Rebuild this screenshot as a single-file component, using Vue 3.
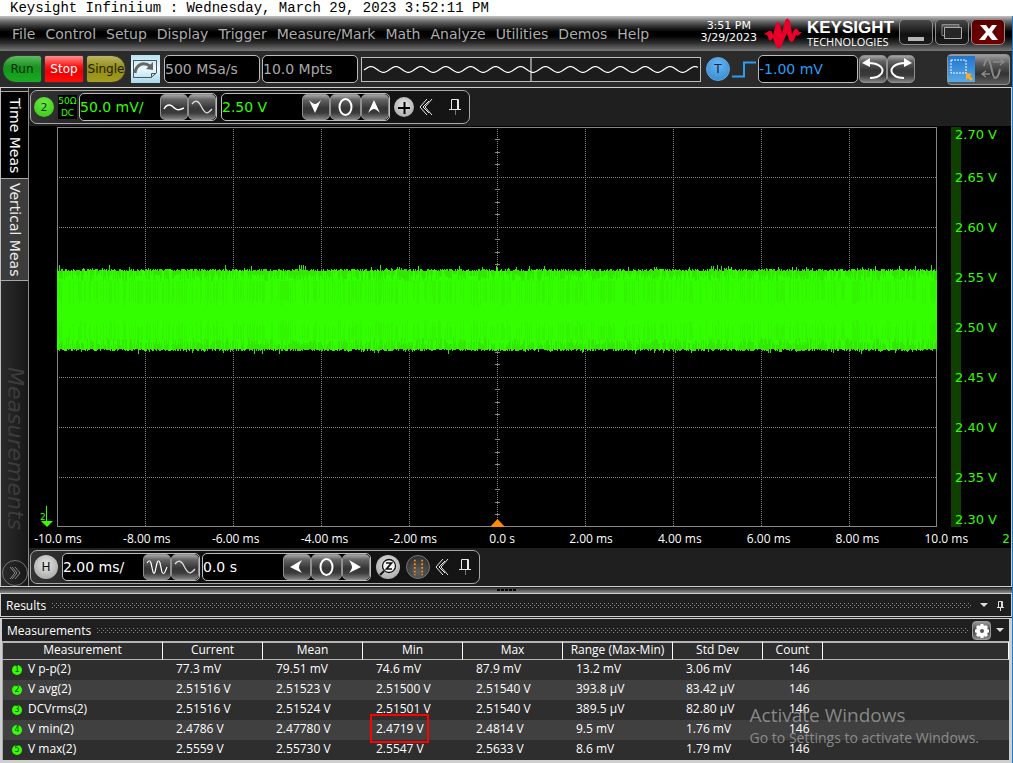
<script setup>
import { ref } from 'vue'

const menus = ['File', 'Control', 'Setup', 'Display', 'Trigger', 'Measure/Mark', 'Math', 'Analyze', 'Utilities', 'Demos', 'Help']

const sampleRate = ref('500 MSa/s')
const memoryDepth = ref('10.0 Mpts')
const triggerLevel = ref('-1.00 mV')
const verticalScale = ref('50.0 mV/')
const verticalOffset = ref('2.50 V')
const timeScale = ref('2.00 ms/')
const timePosition = ref('0.0 s')

const voltLabels = ['2.70 V', '2.65 V', '2.60 V', '2.55 V', '2.50 V', '2.45 V', '2.40 V', '2.35 V', '2.30 V']
const timeLabels = ['-10.0 ms', '-8.00 ms', '-6.00 ms', '-4.00 ms', '-2.00 ms', '0.0 s', '2.00 ms', '4.00 ms', '6.00 ms', '8.00 ms', '10.0 ms']

const columns = ['Measurement', 'Current', 'Mean', 'Min', 'Max', 'Range (Max-Min)', 'Std Dev', 'Count']
const rows = [
  { name: 'V p-p(2)', values: ['77.3 mV', '79.51 mV', '74.6 mV', '87.9 mV', '13.2 mV', '3.06 mV', '146'] },
  { name: 'V avg(2)', values: ['2.51516 V', '2.51523 V', '2.51500 V', '2.51540 V', '393.8 µV', '83.42 µV', '146'] },
  { name: 'DCVrms(2)', values: ['2.51516 V', '2.51524 V', '2.51501 V', '2.51540 V', '389.5 µV', '82.80 µV', '146'] },
  { name: 'V min(2)', values: ['2.4786 V', '2.47780 V', '2.4719 V', '2.4814 V', '9.5 mV', '1.76 mV', '146'], marked: 2 },
  { name: 'V max(2)', values: ['2.5559 V', '2.55730 V', '2.5547 V', '2.5633 V', '8.6 mV', '1.79 mV', '146'] }
]

// Overview trace shown in the toolbar: one sine period every 25 units.
let overview = ''
for (let x = 2; x <= 337; x++) {
  const y = 12 - 3 * Math.cos(((x - 9) / 25) * 2 * Math.PI)
  overview += (overview ? 'L' : 'M') + x + ' ' + y.toFixed(1)
}

// Small deterministic generator so the noise looks the same on every load.
let seed = 2023
function random() {
  seed = (seed * 1103515245 + 12345) % 2147483648
  return seed / 2147483648
}

let noise = ''
let shade = ''
let core = ''
for (let x = 0; x < 880; x++) {
  const spikeUp = random() < 0.07 ? 1 + Math.floor(random() * 4) : 0
  const spikeDown = random() < 0.07 ? 1 + Math.floor(random() * 3) : 0
  const top = 144 - Math.floor(random() * 3) - spikeUp
  const bottom = 222 + Math.floor(random() * 3) + spikeDown
  noise += `M${x + 0.5} ${top}V${bottom}`
  if (random() < 0.75) {
    shade += `M${x + 0.5} ${top}V${147 + Math.floor(random() * 8)}`
    shade += `M${x + 0.5} ${bottom}V${218 - Math.floor(random() * 8)}`
  }
  if (random() < 0.4) {
    core += `M${x + 0.5} 154V${172 + Math.floor(random() * 8)}`
    core += `M${x + 0.5} 213V${200 - Math.floor(random() * 8)}`
  }
}

const gridX = [88, 176, 264, 352, 440, 528, 616, 704, 792]
const gridY = [50, 100, 150, 200, 250, 300, 350]
let ticks = ''
for (let i = 1; i < 32; i++) {
  if (i % 4) ticks += `M438 ${Math.floor(i * 12.5)}.5h5`
}
</script>

<template>
  <div class="app">
    <header class="caption">Keysight Infiniium : Wednesday, March 29, 2023 3:52:11 PM</header>

    <div class="window">
      <div class="menubar">
        <nav class="menus">
          <button v-for="m in menus" :key="m" type="button">{{ m }}</button>
        </nav>
        <div class="clock"><div>3:51 PM</div><div>3/29/2023</div></div>
        <svg class="logo" width="38" height="32" viewBox="0 0 38 32" aria-hidden="true">
          <path d="M0 16L5 13Q7 12 8 14L9 17L12 6Q14 2 16 6L18 15L21 3Q23 -2 26 3L28 16L30 12Q32 9 34 12L35 14L38 14L34 18L32 17L30 22Q28 26 25 22L23 15L19 24L17 29Q14 33 12 28L9 20L8 21Q5 25 4 19L3 17Z" fill="#e90029" />
        </svg>
        <div class="brand"><div class="brand-name">KEYSIGHT</div><div class="brand-sub">TECHNOLOGIES</div></div>
        <div class="winbtns">
          <button type="button" class="winbtn" aria-label="Minimize">
            <svg width="34" height="24" viewBox="0 0 34 24"><rect x="8" y="17" width="16" height="4" fill="#b5b5b5" /></svg>
          </button>
          <button type="button" class="winbtn" aria-label="Restore">
            <svg width="34" height="24" viewBox="0 0 34 24" fill="none" stroke="#8d8d8d"><path d="M6 4.500h17v11h-17zM6 6h17" /><path d="M8.500 7.500h17v11h-17z" fill="#262626" stroke="#aaa" /></svg>
          </button>
          <button type="button" class="winbtn close" aria-label="Close">
            <svg width="34" height="24" viewBox="0 0 34 24"><path d="M8 5H14L17 9L20 5H25L20 12L26 20H20L16 15L13 20H7L14 12Z" fill="#fff" /></svg>
          </button>
        </div>
      </div>

      <div class="toolbar">
        <div class="runctl">
          <button type="button" class="run">Run</button>
          <button type="button" class="stop">Stop</button>
          <button type="button" class="single">Single</button>
        </div>
        <button type="button" class="autoscale" aria-label="Clear display">
          <svg width="29" height="28" viewBox="0 0 29 28" fill="none">
            <path d="M2.500 6V22.500H20L25.500 18V6M2 5.500H26M20.500 22.500V18.500H25" stroke="#4c555a" />
            <path d="M4 18C5 10 12 6 19 11" stroke="#666" stroke-width="3" />
            <path d="M15 14L22 7L22 15Z" fill="#666" />
          </svg>
        </button>
        <div class="field grey rate"><input v-model="sampleRate" aria-label="Sample rate" /></div>
        <div class="field grey depth"><input v-model="memoryDepth" aria-label="Memory depth" /></div>
        <div class="overview">
          <svg viewBox="0 0 339 24" preserveAspectRatio="none" aria-hidden="true">
            <path :d="overview" fill="none" stroke="#fff" stroke-width="1.300" />
            <path d="M169.500 0V24" stroke="#fff" />
          </svg>
        </div>
        <button type="button" class="trig" aria-label="Trigger settings">T</button>
        <svg class="edge" width="25" height="20" viewBox="0 0 25 20" aria-hidden="true"><path d="M0 17.500H12V3.500H24" fill="none" stroke="#2b9df4" stroke-width="2" /></svg>
        <div class="field blue level"><input v-model="triggerLevel" aria-label="Trigger level" /></div>
        <button type="button" class="key" aria-label="Undo">
          <svg width="26" height="26" viewBox="0 0 26 26"><path d="M8 7C21 7 26 14 20 19C18 21 15 22 10 22" fill="none" stroke="#fff" stroke-width="2" /><path d="M2 7L10 2V11Z" fill="#fff" /></svg>
        </button>
        <button type="button" class="key" aria-label="Redo">
          <svg width="26" height="26" viewBox="0 0 26 26"><path d="M18 7C5 7 0 14 6 19C8 21 11 22 16 22" fill="none" stroke="#fff" stroke-width="2" /><path d="M24 7L16 2V11Z" fill="#fff" /></svg>
        </button>
        <div class="modes">
          <button type="button" class="mode on" aria-label="Zoom box">
            <svg width="26" height="26" viewBox="0 0 26 26"><rect x="3" y="4" width="15" height="13" fill="none" stroke="#fff" stroke-dasharray="2 1" /><path d="M18 17L24 18L22 20L25 23L23 25L20 22L18 24Z" fill="#ffae1c" /></svg>
          </button>
          <button type="button" class="mode" aria-label="Drag waveform">
            <svg width="32" height="26" viewBox="0 0 32 26" fill="none" stroke="#898989" stroke-width="2"><path d="M9 10C10 5 11 3 13 3C16 3 17 22 20 22C23 22 24 18 25 13" /><path d="M18 6H29M25 3L29 6L25 9M15 18H7M11 15L7 18L11 21" stroke-width="1.500" /></svg>
          </button>
        </div>
      </div>

      <div class="main">
        <aside class="side">
          <button type="button" class="tab active">Time Meas</button>
          <button type="button" class="tab">Vertical Meas</button>
          <div class="rail">
            <span>Measurements</span>
            <button type="button" class="expand" aria-label="Expand panel">
              <svg width="24" height="24" viewBox="0 0 24 24" fill="none" stroke="#8a8a8a"><path d="M7 6L12 12L7 18M9 6L14 12L9 18M12 6L17 12L12 18" /></svg>
            </button>
          </div>
        </aside>

        <section class="scope">
          <div class="strip">
            <div class="bar">
              <button type="button" class="round green">2</button>
              <div class="coupling"><div>50Ω</div><div>DC</div></div>
              <div class="field lime wide-a">
                <input v-model="verticalScale" aria-label="Vertical scale" />
                <button type="button" class="key" aria-label="Increase scale"><svg width="26" height="24" viewBox="0 0 26 24"><path d="M3 14C5 10 8 9 11 11C15 15 17 16 23 13" fill="none" stroke="#fff" stroke-width="1.500" /></svg></button>
                <button type="button" class="key" aria-label="Decrease scale"><svg width="26" height="24" viewBox="0 0 26 24"><path d="M3 9C6 5 9 5 12 11C16 19 18 20 23 14" fill="none" stroke="#ddd" stroke-width="1.300" /></svg></button>
              </div>
              <div class="field lime wide-b">
                <input v-model="verticalOffset" aria-label="Vertical offset" />
                <button type="button" class="key" aria-label="Offset down"><svg width="26" height="24" viewBox="0 0 26 24"><path d="M6 5Q10 9 12 9Q14 9 18 5L12 18Z" fill="#fff" /></svg></button>
                <button type="button" class="key zero" aria-label="Offset zero"><svg width="28" height="24" viewBox="0 0 28 24"><ellipse cx="13.500" cy="12" rx="6" ry="8" fill="none" stroke="#fff" stroke-width="2" /></svg></button>
                <button type="button" class="key" aria-label="Offset up"><svg width="26" height="24" viewBox="0 0 26 24"><path d="M6 18Q10 14 12 14Q14 14 18 18L12 5Z" fill="#fff" /></svg></button>
              </div>
              <button type="button" class="round silver add" aria-label="Add">
                <svg width="20" height="20" viewBox="0 0 20 20"><path d="M4 11H16M10.500 5V17" stroke="#000" stroke-width="2" /></svg>
              </button>
              <button type="button" class="plain" aria-label="Collapse vertical bar"><svg width="15" height="18" viewBox="0 0 15 18" fill="none" stroke="#e8e8e8"><path d="M8 1L1 9L8 17M10 3L4 9L10 15M13 1L6 9L13 17" /></svg></button>
              <button type="button" class="plain pin" aria-label="Pin vertical bar"><svg width="13" height="18" viewBox="0 0 13 18" fill="none" stroke="#e8e8e8"><path d="M2.500 11V1.500H9.500V11M8.500 1V11M0 11.500H12" /><path d="M6.500 12V17" stroke="#777" /></svg></button>
            </div>
          </div>

          <div class="display">
            <div class="gutter">
              <svg width="14" height="23" viewBox="0 0 14 23" aria-hidden="true"><path d="M6.500 2V18" stroke="#3f0" /><path d="M1 17H13L7 23Z" fill="#3f0" /></svg>
              <span>2</span>
            </div>
            <div class="plot">
              <svg viewBox="0 0 880 400" preserveAspectRatio="none" aria-label="Channel 2 waveform">
                <g stroke="#868686" stroke-dasharray="1 1" shape-rendering="crispEdges">
                  <path v-for="x in gridX" :key="'x' + x" :d="`M${x + 0.5} 2V400`" />
                  <path v-for="y in gridY" :key="'y' + y" :d="`M2 ${y + 0.5}H880`" />
                </g>
                <path :d="ticks" stroke="#868686" shape-rendering="crispEdges" />
                <rect x="0.5" y="0.5" width="879" height="399" fill="none" stroke="#868686" />
                <g shape-rendering="crispEdges">
                  <rect x="0" y="144" width="880" height="78" fill="#3f0" />
                  <path :d="noise" stroke="#3f0" />
                  <path :d="shade" stroke="#31e900" />
                  <path :d="core" stroke="#32f600" />
                </g>
                <path d="M433 400L440.500 392L448 400Z" fill="#ff8c00" />
              </svg>
            </div>
            <ol class="volts"><li v-for="v in voltLabels" :key="v">{{ v }}</li></ol>
            <div class="times">
              <ol><li v-for="t in timeLabels" :key="t">{{ t }}</li></ol>
              <span>2</span>
            </div>
          </div>

          <div class="strip low">
            <div class="bar">
              <button type="button" class="round silver big">H</button>
              <div class="field white wide-a">
                <input v-model="timeScale" aria-label="Time scale" />
                <button type="button" class="key" aria-label="Zoom out"><svg width="26" height="24" viewBox="0 0 26 24"><path d="M3 8C5 5 6 5 7 8L9 17C10 19 10 19 11 17L13 8C14 5 15 5 16 8L18 17C19 19 20 19 21 17L23 12" fill="none" stroke="#fff" stroke-width="1.200" /></svg></button>
                <button type="button" class="key" aria-label="Zoom in"><svg width="26" height="24" viewBox="0 0 26 24"><path d="M3 9C6 5 9 5 12 11C16 19 18 20 23 14" fill="none" stroke="#ddd" stroke-width="1.300" /></svg></button>
              </div>
              <div class="field white wide-b">
                <input v-model="timePosition" aria-label="Horizontal position" />
                <button type="button" class="key" aria-label="Move left"><svg width="26" height="24" viewBox="0 0 26 24"><path d="M18 5Q15 10 15 12Q15 14 18 18L6 12Z" fill="#fff" /></svg></button>
                <button type="button" class="key zero" aria-label="Position zero"><svg width="28" height="24" viewBox="0 0 28 24"><ellipse cx="13.500" cy="12" rx="6" ry="8" fill="none" stroke="#fff" stroke-width="2" /></svg></button>
                <button type="button" class="key" aria-label="Move right"><svg width="26" height="24" viewBox="0 0 26 24"><path d="M6 5Q9 10 9 12Q9 14 6 18L18 12Z" fill="#fff" /></svg></button>
              </div>
              <button type="button" class="round silver big zoom" aria-label="Zoom">
                <svg width="24" height="24" viewBox="0 0 24 24" fill="none" stroke="#111"><circle cx="13" cy="11" r="6.500" fill="#f4f4f4" stroke-width="1.300" /><path d="M8 16L4 20" stroke-width="2" /><path d="M10 8H15.500L10.500 14H16" stroke-width="1.700" /></svg>
              </button>
              <button type="button" class="round dark big" aria-label="Markers">
                <svg width="24" height="24" viewBox="0 0 24 24"><path d="M8.500 4V21M16.500 4V21" stroke="#f58a1a" stroke-width="2" stroke-dasharray="2 2" /></svg>
              </button>
              <button type="button" class="plain" aria-label="Collapse horizontal bar"><svg width="15" height="18" viewBox="0 0 15 18" fill="none" stroke="#e8e8e8"><path d="M8 1L1 9L8 17M10 3L4 9L10 15M13 1L6 9L13 17" /></svg></button>
              <button type="button" class="plain pin-low" aria-label="Pin horizontal bar"><svg width="13" height="18" viewBox="0 0 13 18" fill="none" stroke="#e8e8e8"><path d="M2.500 11V1.500H9.500V11M8.500 1V11M0 11.500H12" /><path d="M6.500 12V17" stroke="#777" /></svg></button>
            </div>
          </div>
        </section>
      </div>

      <div class="splitter"><i></i></div>

      <div class="panelhead results">
        <h2>Results</h2><div class="dots"></div>
        <button type="button" class="plain" aria-label="Results menu"><svg width="9" height="5" viewBox="0 0 9 5"><path d="M0 0H8L4 4Z" fill="#ddd" /></svg></button>
        <button type="button" class="plain" aria-label="Pin results"><svg width="8" height="12" viewBox="0 0 8 12" fill="none" stroke="#ddd"><path d="M1.500 7V1.500H5.500V7M4.500 1V7M0 7.500H7M3.500 8V11" /></svg></button>
      </div>

      <section class="measurements">
        <div class="panelhead">
          <h2>Measurements</h2><div class="dots"></div>
          <button type="button" class="gear" aria-label="Measurement settings">
            <svg width="16" height="16" viewBox="0 0 16 16"><circle cx="8" cy="8" r="4" fill="none" stroke="#fff" stroke-width="4" /><path d="M8 1V15M1 8H15M3 3L13 13M13 3L3 13" stroke="#fff" stroke-width="3" /><circle cx="8" cy="8" r="2" fill="#555" /></svg>
          </button>
          <button type="button" class="plain" aria-label="Measurements menu"><svg width="9" height="5" viewBox="0 0 9 5"><path d="M0 0H8L4 4Z" fill="#ddd" /></svg></button>
        </div>
        <table>
          <colgroup>
            <col class="c-name" /><col class="c-val" /><col class="c-val" /><col class="c-val" /><col class="c-val" /><col class="c-range" /><col class="c-dev" /><col class="c-count" /><col />
          </colgroup>
          <thead>
            <tr><th v-for="c in columns" :key="c" scope="col">{{ c }}</th><td></td></tr>
          </thead>
          <tbody>
            <tr v-for="(r, i) in rows" :key="r.name">
              <th scope="row"><b class="dot">{{ i + 1 }}</b>{{ r.name }}</th>
              <td v-for="(v, j) in r.values" :key="j"><span :class="{ marked: r.marked === j }">{{ v }}</span></td>
              <td></td>
            </tr>
          </tbody>
        </table>
        <div class="watermark"><div class="wm-title">Activate Windows</div><div>Go to Settings to activate Windows.</div></div>
      </section>
    </div>
  </div>
</template>

<style>
body { margin: 0; background: #fff; }
</style>

<style scoped>
* { box-sizing: border-box; }
svg { display: block; }
button, input { font: inherit; color: inherit; margin: 0; padding: 0; border: 0; background: none; }
ol { list-style: none; margin: 0; padding: 0; }

.app { min-height: 100vh; display: flex; flex-direction: column; font-family: "DejaVu Sans", Verdana, sans-serif; font-size: 14px; color: #fff; }
.caption { height: 16px; padding-left: 10px; font: 14px/16px "Liberation Mono", "Courier New", monospace; color: #000; background: #fff; white-space: nowrap; }
.window { flex: 1; display: flex; flex-direction: column; border-right: 1px solid #1b7fd0; border-bottom: 1px solid #1b7fd0; background: #1f1f1f; }

.menubar { height: 35px; display: flex; align-items: center; padding: 0 7px 0 12px; background: linear-gradient(#c4c4c4 0, #6f6f6f 5px, #2a2a2a 11px, #000 16px, #000 20px, #2e2e2e 27px, #777 35px); color: #acacac; }
.menus { display: flex; gap: 10px; flex: 1; white-space: nowrap; }
.clock { font-size: 11px; line-height: 12px; text-align: center; color: #fff; margin: 0 7px 4px 0; }
.brand { margin: 0 6px 0 5px; width: 86px; color: #fff; }
.brand-name { font: bold 17px/16px "Liberation Sans", Arial, sans-serif; }
.brand-sub { font: 11px/11px "Open Sans", sans-serif; }
.winbtns { display: flex; gap: 2px; margin-bottom: 4px; }
.winbtn { width: 34px; height: 26px; border: 1px solid #8d8d8d; border-radius: 5px; background: linear-gradient(#4a4a4a, #111 60%, #1c1c1c); overflow: hidden; }
.winbtn.close { background: linear-gradient(#5a0000, #6c0000); border-color: #9a8484; }

.toolbar { height: 37px; display: flex; align-items: center; padding: 0 2px; background: #2b2b2b; border-bottom: 1px solid #d0d0d0; }
.runctl { display: flex; gap: 2px; width: 124px; }
.runctl button { flex: 1; height: 28px; font-size: 12px; border: 1px solid #333; }
.run { color: #062e06; border-radius: 14px 3px 3px 14px; background: linear-gradient(#5fbc62, #1d9424 40%, #129b1b 60%, #1bab26); }
.stop { color: #fff; border-radius: 2px; background: linear-gradient(#ff8d8d, #fa1414 40%, #ed0000 60%, #ff0d0d); }
.single { color: #1d1b00; border-radius: 3px 14px 14px 3px; background: linear-gradient(#bdb765, #98921e 40%, #968f14 60%, #a49d24); }
.autoscale { width: 29px; height: 28px; margin: 0 4px 0 5px; background: linear-gradient(#b8e2f2, #eaf8fd 50%, #a5d9ec); }

.field { display: flex; align-items: center; height: 28px; background: #000; border: 1px solid #bcbcbc; border-radius: 5px; overflow: hidden; }
.field input { flex: 1; min-width: 0; width: 20px; height: 24px; outline: none; }
.grey { color: #a9a9a9; }
.blue { color: #2b9df4; }
.lime { color: #3f0; }
.white { color: #fff; }
.rate { width: 96px; }
.depth { width: 96px; margin: 0 3px 0 2px; }
.overview { flex: 1; height: 25px; border: 1px solid #bdbdbd; background: #1c1c1c; }
.overview svg { width: 100%; height: 100%; }
.trig { width: 24px; height: 24px; margin: 0 2px 0 5px; border-radius: 50%; background: radial-gradient(circle at 50% 30%, #6ab6f3, #2f86cd); color: #08243f; font-size: 12px; border: 1px solid #5ea8e2; }
.edge { margin-right: 1px; }
.level { width: 100px; margin-right: 1px; }
.key { flex: none; display: flex; align-items: center; justify-content: center; width: 28px; height: 28px; border: 1px solid #8f8f8f; border-radius: 5px; background: linear-gradient(#a5a5a5, #636363 20%, #353535 55%, #3b3b3b 75%, #7f7f7f); }
.field .key { height: 26px; }
.key.zero { width: 31px; }
.modes { display: flex; align-items: center; margin-left: 32px; width: 63px; height: 31px; border: 1px solid #929292; border-radius: 4px; background: linear-gradient(#9d9d9d, #5a5a5a 30%, #333 65%, #5d5d5d); overflow: hidden; }
.mode { width: 32px; }
.mode.on { width: 27px; background: linear-gradient(#1f75cf, #5ba9e6); }

.main { flex: 1; display: flex; border-bottom: 1px solid #cfcfcf; border-right: 1px solid #cfcfcf; }
.side { flex: none; width: 29px; padding-top: 3px; display: flex; flex-direction: column; border-left: 1px solid #bfbfbf; border-right: 1px solid #8c8c8c; background: #1b1b1b; }
.tab { flex: none; height: 102px; writing-mode: vertical-rl; text-align: left; line-height: 26px; padding-top: 4px; background: #3c3c3c; border-bottom: 1px solid #a8a8a8; color: #eee; white-space: nowrap; }
.tab.active { height: 88px; padding-top: 6px; background: #000; border-top: 1px solid #a8a8a8; color: #fff; }
.rail { flex: 1; display: flex; flex-direction: column; align-items: center; justify-content: flex-end; gap: 30px; background: linear-gradient(90deg, #2b2b2b, #171717); }
.rail span { writing-mode: vertical-rl; font-size: 22px; line-height: 26px; font-style: italic; color: #3c3c3c; }
.expand { width: 26px; height: 26px; border: 1px solid #757575; border-radius: 50%; }

.scope { flex: 1; min-width: 0; display: flex; flex-direction: column; }
.strip { padding: 2px 0 2px 1px; background: #1f1f1f; display: flex; }
.bar { display: flex; align-items: center; height: 34px; padding: 0 7px 0 3px; border: 1px solid #a9a9a9; border-radius: 7px; background: linear-gradient(90deg, #333, #111 30%, #151515); }
.round { flex: none; display: flex; align-items: center; justify-content: center; width: 20px; height: 20px; border-radius: 50%; font-size: 11px; }
.round.big { width: 24px; height: 24px; font-size: 12px; }
.green { background: radial-gradient(circle at 50% 30%, #6fe84a, #32c60e); color: #0c3a02; }
.silver { background: radial-gradient(circle at 50% 40%, #e6e6e6, #9b9b9b); color: #111; }
.dark { background: radial-gradient(circle at 50% 75%, #606060, #262626); border: 1px solid #777; }
.coupling { width: 19px; margin: 0 2px 0 4px; background: #000; color: #3f0; font-size: 9px; line-height: 12px; text-align: center; }
.wide-a { width: 138px; margin-right: 4px; }
.wide-b { width: 169px; margin-right: 4px; }
.low .wide-a { margin: 0 2px 0 4px; }
.low .wide-b { margin-right: 5px; }
.zoom { margin-right: 6px; }
.plain { display: flex; align-items: center; justify-content: center; margin-left: 5px; }
.pin { margin-left: 15px; }
.pin-low { margin-left: 9px; }

.display { flex: 1; display: grid; grid-template-columns: 28px minmax(0, 1fr) 74px; grid-template-rows: minmax(400px, 1fr) 21px; background: #000; padding-top: 1px; }
.gutter { position: relative; display: flex; align-items: flex-end; padding-left: 11px; color: #3f0; }
.gutter span { position: absolute; left: 11px; bottom: 5px; font-size: 9px; line-height: 10px; }
.plot { position: relative; }
.plot svg { position: absolute; width: 100%; height: 100%; }
.volts { display: grid; grid-template-rows: 1fr repeat(7, 2fr) 1fr; align-items: center; margin-left: 14px; padding-left: 4px; font-size: 13px; line-height: 15px; color: #3f0; background: linear-gradient(#104000, #104000) no-repeat 0 0 / 10px 100%; }
.volts li:first-child { align-self: start; }
.volts li:last-child { align-self: end; }
.times { grid-column: 1 / -1; display: flex; align-items: center; justify-content: space-between; padding: 3px 1px 0 5px; }
.times ol { flex: 1; display: flex; justify-content: space-between; margin-right: 32px; font: 12px/16px "Open Sans", "Segoe UI", sans-serif; }
.times li { width: 48px; text-align: center; white-space: nowrap; }
.times span { color: #3f0; font-size: 12px; line-height: 16px; }

.splitter { height: 7px; background: linear-gradient(#222, #8c8c8c); border-bottom: 1px solid #cfcfcf; display: flex; justify-content: center; }
.splitter i { width: 19px; height: 2px; margin-top: 2px; background: repeating-linear-gradient(90deg, #000 0 3px, transparent 3px 4px); }
.panelhead { display: flex; align-items: center; height: 22px; padding: 1px 4px 0 5px; background: #1f1f1f; }
.panelhead h2 { margin: 0 6px 0 0; font: 12px/16px "Open Sans", "Segoe UI", sans-serif; }
.dots { flex: 1; height: 5px; margin-right: 4px; background: conic-gradient(at 1px 1px, transparent 75%, #8a8a8a 0) 0 0 / 4px 4px, conic-gradient(at 1px 1px, transparent 75%, #8a8a8a 0) 2px 2px / 4px 4px; }
.results { border-left: 1px solid #cfcfcf; border-right: 1px solid #cfcfcf; height: 23px; padding-right: 6px; border-bottom: 1px solid #cfcfcf; }
.results .plain:last-child { margin-left: 8px; }
.measurements { position: relative; margin-top: 1px; border: solid #cfcfcf; border-width: 1px 3px 3px 2px; }
.gear { width: 19px; height: 19px; border: 1px solid #999; border-radius: 4px; background: linear-gradient(#999, #444 50%, #888); display: flex; align-items: center; justify-content: center; }

table { width: 100%; table-layout: fixed; border-collapse: separate; border-spacing: 0; border-left: 1px solid #a9a9a9; font: 12px/16px "Open Sans", "Segoe UI", sans-serif; background: #2e2e2e; }
.c-name { width: 160px; }
.c-val { width: 100px; }
.c-range { width: 110px; }
.c-dev { width: 90px; }
.c-count { width: 60px; }
th, td { font-weight: 400; padding: 0 0 2px; white-space: nowrap; text-align: left; }
thead th, thead td { height: 19px; line-height: 14px; text-align: center; border: solid #b5b5b5; border-width: 2px 0 1px 0; border-right: 1px solid #fff; }
tbody tr { height: 20px; }
tbody tr:nth-child(even) { background: #404040; }
tbody th { padding-left: 9px; }
tbody td { padding-left: 13px; }
tbody td:nth-child(8) { padding-left: 26px; }
.dot { display: inline-block; width: 10px; height: 10px; margin-right: 6px; border-radius: 50%; background: #3f0; color: #0a4a00; font: 8px/10px "DejaVu Sans", sans-serif; text-align: center; vertical-align: 1px; }
.marked { outline: 2px solid #f00; padding: 4px 3px 4px 4px; margin-left: -4px; }
.watermark { position: absolute; right: 30px; bottom: 12px; color: rgba(160, 160, 160, 0.8); font: 14px/20px "Open Sans", "Segoe UI", sans-serif; pointer-events: none; }
.wm-title { font-size: 19px; line-height: 26px; }
</style>
